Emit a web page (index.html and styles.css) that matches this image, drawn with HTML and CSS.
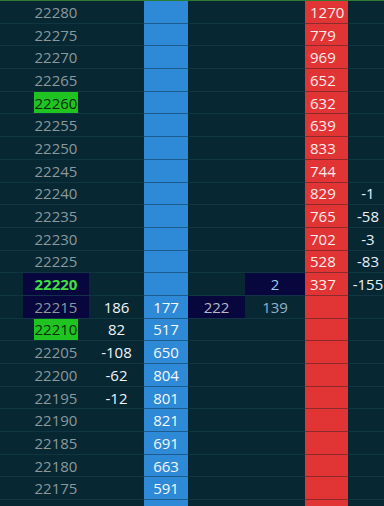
FILE: index.html
```html
<!DOCTYPE html>
<html lang="en">
<head>
  <meta charset="UTF-8">
  <title>DOM Ladder</title>
  <link rel="stylesheet" href="styles.css">
</head>
<body>

<div class="ladder">
  <div class="row"><span></span><span class="px">22280</span><span></span><span class="bid"></span><span></span><span></span><span class="ask">1270</span><span></span></div>
  <div class="row"><span></span><span class="px">22275</span><span></span><span class="bid"></span><span></span><span></span><span class="ask">779</span><span></span></div>
  <div class="row"><span></span><span class="px">22270</span><span></span><span class="bid"></span><span></span><span></span><span class="ask">969</span><span></span></div>
  <div class="row"><span></span><span class="px">22265</span><span></span><span class="bid"></span><span></span><span></span><span class="ask">652</span><span></span></div>
  <div class="row"><span></span><span class="px"><b class="hit">22260</b></span><span></span><span class="bid"></span><span></span><span></span><span class="ask">632</span><span></span></div>
  <div class="row"><span></span><span class="px">22255</span><span></span><span class="bid"></span><span></span><span></span><span class="ask">639</span><span></span></div>
  <div class="row"><span></span><span class="px">22250</span><span></span><span class="bid"></span><span></span><span></span><span class="ask">833</span><span></span></div>
  <div class="row"><span></span><span class="px">22245</span><span></span><span class="bid"></span><span></span><span></span><span class="ask">744</span><span></span></div>
  <div class="row"><span></span><span class="px">22240</span><span></span><span class="bid"></span><span></span><span></span><span class="ask">829</span><span class="delta">-1</span></div>
  <div class="row"><span></span><span class="px">22235</span><span></span><span class="bid"></span><span></span><span></span><span class="ask">765</span><span class="delta">-58</span></div>
  <div class="row"><span></span><span class="px">22230</span><span></span><span class="bid"></span><span></span><span></span><span class="ask">702</span><span class="delta">-3</span></div>
  <div class="row"><span></span><span class="px">22225</span><span></span><span class="bid"></span><span></span><span></span><span class="ask">528</span><span class="delta">-83</span></div>
  <!-- inside market -->
  <div class="row"><span></span><span class="px navy last">22220</span><span></span><span class="bid"></span><span></span><span class="navy ask-size">2</span><span class="ask">337</span><span class="delta">-155</span></div>
  <div class="row"><span></span><span class="px navy">22215</span><span>186</span><span class="bid">177</span><span class="navy bid-size">222</span><span class="vol">139</span><span class="ask"></span><span></span></div>
  <div class="row"><span></span><span class="px"><b class="hit">22210</b></span><span>82</span><span class="bid">517</span><span></span><span></span><span class="ask"></span><span></span></div>
  <div class="row"><span></span><span class="px">22205</span><span>-108</span><span class="bid">650</span><span></span><span></span><span class="ask"></span><span></span></div>
  <div class="row"><span></span><span class="px">22200</span><span>-62</span><span class="bid">804</span><span></span><span></span><span class="ask"></span><span></span></div>
  <div class="row"><span></span><span class="px">22195</span><span>-12</span><span class="bid">801</span><span></span><span></span><span class="ask"></span><span></span></div>
  <div class="row"><span></span><span class="px">22190</span><span></span><span class="bid">821</span><span></span><span></span><span class="ask"></span><span></span></div>
  <div class="row"><span></span><span class="px">22185</span><span></span><span class="bid">691</span><span></span><span></span><span class="ask"></span><span></span></div>
  <div class="row"><span></span><span class="px">22180</span><span></span><span class="bid">663</span><span></span><span></span><span class="ask"></span><span></span></div>
  <div class="row"><span></span><span class="px">22175</span><span></span><span class="bid">591</span><span></span><span></span><span class="ask"></span><span></span></div>
  <!-- next row, only its top edge is in view -->
  <div class="row"><span></span><span class="px"></span><span></span><span class="bid"></span><span></span><span></span><span class="ask"></span><span></span></div>
</div>

</body>
</html>
```

FILE: styles.css
```css
html, body { margin: 0; height: 100%; overflow: hidden; }
body { background: #072833; font-family: "Open Sans", sans-serif; font-size: 15px; }
.ladder { border-top: 1px solid #2a7d34; }
.row {
  display: grid;
  grid-template-columns: 23px 66px 55px 44px 57px 60px 43px 40px;
  height: 22.7px;
}
.row > span {
  display: flex;
  align-items: center;
  justify-content: center;
  border-bottom: 1px solid #0f3641;
  color: #f1f3f5;
  white-space: nowrap;
  overflow: hidden;
}
/* price column */
.row > .px { color: #8b989e; }
.hit {
  align-self: stretch;
  display: flex;
  align-items: center;
  padding: 0 1px;
  font-weight: normal;
  background: #20c420;
  color: #0b2c0c;
}
.row > .navy { background: #07073d; border-bottom-color: #14304a; }
.row > .last { color: #3fe03f; font-weight: bold; }
.row > .ask-size { color: #9dcbeb; }
.row > .bid-size { color: #b5bac6; }
.row > .vol { color: #8fb3cb; }
/* bid / ask columns */
.row > .bid { background: #2e8ad6; border-bottom-color: #1c5b8c; color: #f4f8fc; }
.row > .ask {
  background: #e13434;
  border-bottom-color: #8a2a2c;
  color: #fcecec;
  justify-content: flex-start;
  padding-left: 5px;
}
.row > .delta { color: #eaf1f7; }
```
